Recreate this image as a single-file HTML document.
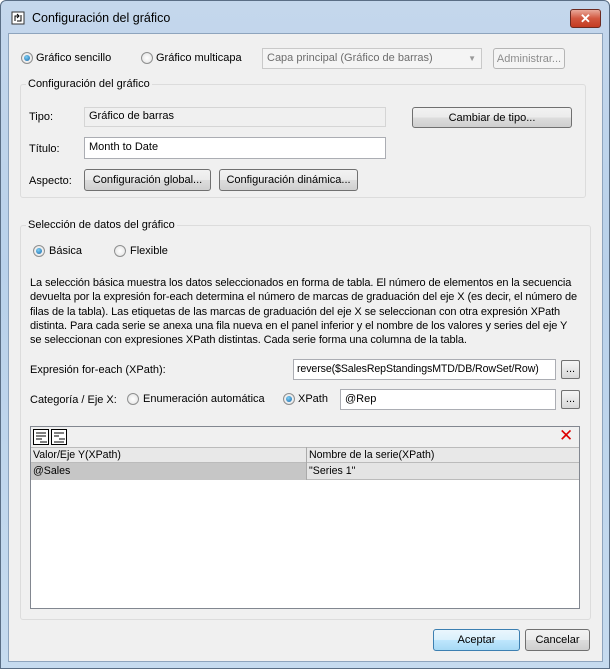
<!DOCTYPE html><html><head><style>
*{box-sizing:border-box;margin:0;padding:0}
body{width:612px;height:670px;background:#fff;font-family:"Liberation Sans",sans-serif;font-size:11px;color:#000;position:relative;overflow:hidden}
.a{position:absolute}
.win{left:0;top:0;width:610px;height:669px;background:linear-gradient(#c4d7ec,#b9d1ea 40%,#c6dbef);border:1px solid #5a6e85;border-radius:6px 6px 0 0}
.cont{left:8px;top:33px;width:595px;height:629px;background:#f0f0f0;border:1px solid #8ea4bd}
.btn{position:absolute;border:1px solid #707070;border-radius:3px;background:linear-gradient(#f2f2f2,#ebebeb 50%,#dddddd 51%,#cfcfcf);text-align:center;line-height:20px}
.inp{position:absolute;background:#fff;border:1px solid #abadb3;padding-left:4px;line-height:19px;white-space:nowrap;overflow:hidden}
.rad{position:absolute;width:12px;height:12px;border-radius:50%;border:1px solid #8e8f8f;background:radial-gradient(#fff,#e0e0e0)}
.rad.on::after{content:"";position:absolute;left:2px;top:2px;width:6px;height:6px;border-radius:50%;background:radial-gradient(circle at 40% 35%,#7fd0f5,#1565a8)}
.grp{position:absolute;border:1px solid #dcdcdc;border-radius:3px}
.lg{position:absolute;background:#f0f0f0;padding:0 2px}
.dots{position:absolute;width:19px;height:19px;border:1px solid #707070;border-radius:2px;background:linear-gradient(#f5f5f5,#d8d8d8);text-align:center;line-height:16px;font-size:11px}
</style></head><body>
<div class="a win"></div>
<svg class="a" style="left:11px;top:11px" width="14" height="14"><rect x="1" y="1" width="12" height="12" fill="#fff" stroke="#333"/><path d="M4 10V5h4M6 3l2 2-2 2M10 4v6H6" stroke="#000" fill="none"/></svg>
<div class="a" style="left:32px;top:11px;font-size:12.5px">Configuración del gráfico</div>
<div class="a" style="left:570px;top:9px;width:31px;height:19px;border:1px solid #6d2b22;border-radius:3px;background:linear-gradient(#e9a99a,#d2573f 50%,#c33b22);color:#fff;text-align:center;font-weight:bold;font-size:13px;line-height:17px">✕</div>
<div class="a cont"></div>

<div class="rad on" style="left:21px;top:52px"></div><div class="a" style="left:36px;top:52px">Gráfico sencillo</div>
<div class="rad" style="left:141px;top:52px"></div><div class="a" style="left:156px;top:52px">Gráfico multicapa</div>
<div class="inp" style="left:262px;top:48px;width:220px;height:21px;color:#6d6d6d;border-color:#c9c9c9;background:#f4f4f4">Capa principal (Gráfico de barras)<span style="position:absolute;right:5px;top:0;font-size:8px;color:#999">▼</span></div>
<div class="btn" style="left:493px;top:48px;width:72px;height:21px;color:#8c8c8c;border-color:#b5b5b5;background:#f4f4f4">Administrar...</div>

<div class="grp" style="left:20px;top:84px;width:566px;height:114px"></div>
<div class="lg" style="left:26px;top:78px">Configuración del gráfico</div>
<div class="a" style="left:29px;top:111px">Tipo:</div>
<div class="inp" style="left:84px;top:107px;width:302px;height:20px;background:#f0f0f0;border-color:#d5d5d5;line-height:16px">Gráfico de barras</div>
<div class="btn" style="left:412px;top:107px;width:160px;height:21px">Cambiar de tipo...</div>
<div class="a" style="left:29px;top:143px">Título:</div>
<div class="inp" style="left:84px;top:137px;width:302px;height:22px">Month to Date</div>
<div class="a" style="left:29px;top:175px">Aspecto:</div>
<div class="btn" style="left:84px;top:169px;width:127px;height:22px">Configuración global...</div>
<div class="btn" style="left:219px;top:169px;width:139px;height:22px">Configuración dinámica...</div>

<div class="grp" style="left:20px;top:225px;width:571px;height:395px"></div>
<div class="lg" style="left:26px;top:219px">Selección de datos del gráfico</div>
<div class="rad on" style="left:33px;top:245px"></div><div class="a" style="left:49px;top:245px">Básica</div>
<div class="rad" style="left:114px;top:245px"></div><div class="a" style="left:130px;top:245px">Flexible</div>
<div class="a" style="left:30px;top:276px;width:560px;line-height:14.3px;font-size:11px;letter-spacing:-0.1px;white-space:nowrap">La selección básica muestra los datos seleccionados en forma de tabla. El número de elementos en la secuencia<br>devuelta por la expresión for-each determina el número de marcas de graduación del eje X (es decir, el número de<br>filas de la tabla). Las etiquetas de las marcas de graduación del eje X se seleccionan con otra expresión XPath<br>distinta. Para cada serie se anexa una fila nueva en el panel inferior y el nombre de los valores y series del eje Y<br>se seleccionan con expresiones XPath distintas. Cada serie forma una columna de la tabla.</div>
<div class="a" style="left:30px;top:364px">Expresión for-each (XPath):</div>
<div class="inp" style="left:293px;top:359px;width:263px;height:21px;padding-left:3px;font-size:10.6px;letter-spacing:-0.1px">reverse($SalesRepStandingsMTD/DB/RowSet/Row)</div>
<div class="dots" style="left:561px;top:360px">...</div>
<div class="a" style="left:30px;top:394px">Categoría / Eje X:</div>
<div class="rad" style="left:127px;top:393px"></div><div class="a" style="left:143px;top:393px">Enumeración automática</div>
<div class="rad on" style="left:283px;top:393px"></div><div class="a" style="left:298px;top:393px">XPath</div>
<div class="inp" style="left:340px;top:389px;width:216px;height:21px">@Rep</div>
<div class="dots" style="left:561px;top:390px">...</div>

<div class="a" style="left:30px;top:426px;width:550px;height:183px;background:#fff;border:1px solid #828790"></div>
<div class="a" style="left:31px;top:427px;width:548px;height:20px;background:#f0f0f0"></div>
<svg class="a" style="left:32px;top:428px" width="40" height="18"><g fill="#fff" stroke="#000"><rect x="1.5" y="1.5" width="15" height="15"/><rect x="19.5" y="1.5" width="15" height="15"/></g><path d="M4 5h10M4 8h10M4 11h6M8 14h7M22 5h10M22 8h5M27 11h6M22 14h10" stroke="#000"/></svg>
<div class="a" style="left:559px;top:426px;color:#d00;font-size:17px;line-height:20px">✕</div>
<div class="a" style="left:31px;top:447px;width:548px;height:16px;background:#e8e8e8;border-top:1px solid #bbb;border-bottom:1px solid #bbb"></div>
<div class="a" style="left:306px;top:447px;width:1px;height:33px;background:#aaa"></div>
<div class="a" style="left:33px;top:449px;font-size:10.6px">Valor/Eje Y(XPath)</div>
<div class="a" style="left:309px;top:449px;font-size:10.6px">Nombre de la serie(XPath)</div>
<div class="a" style="left:31px;top:463px;width:275px;height:17px;background:#c6c6c6"></div>
<div class="a" style="left:307px;top:463px;width:272px;height:17px;background:#e4e4e4;border-bottom:1px solid #bbb"></div>
<div class="a" style="left:33px;top:465px;font-size:10.6px">@Sales</div>
<div class="a" style="left:309px;top:465px;font-size:10.6px">"Series 1"</div>

<div class="btn" style="left:433px;top:629px;width:87px;height:22px;border-color:#3c7fb1;background:linear-gradient(#eaf6fd,#d9f0fc 50%,#bee6fd 51%,#a7d9f5)">Aceptar</div>
<div class="btn" style="left:525px;top:629px;width:65px;height:22px">Cancelar</div>
</body></html>
